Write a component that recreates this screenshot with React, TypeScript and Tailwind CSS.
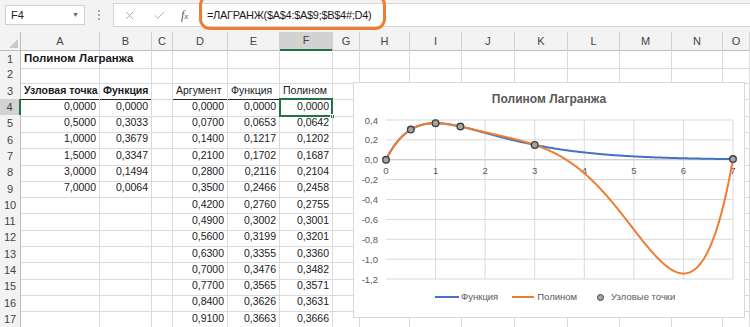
import { X, Check } from "lucide-react";

const COLS =
  "grid grid-cols-[21px_79px_52px_21px_55px_52px_53px_27px_50px_52px_53px_53px_52px_52px_51px_1fr]";
const LETTERS = ["A", "B", "C", "D", "E", "F", "G", "H", "I", "J", "K", "L", "M", "N", "O"];

const nodeX = [0, 0.5, 1, 1.5, 3, 7];
const nodeY = [0, 0.3033, 0.3679, 0.3347, 0.1494, 0.0064];

const argCol = ["0,0000", "0,0700", "0,1400", "0,2100", "0,2800", "0,3500", "0,4200", "0,4900", "0,5600", "0,6300", "0,7000", "0,7700", "0,8400", "0,9100"];
const funCol = ["0,0000", "0,0653", "0,1217", "0,1702", "0,2116", "0,2466", "0,2760", "0,3002", "0,3199", "0,3355", "0,3476", "0,3565", "0,3626", "0,3663"];
const polCol = ["0,0000", "0,0642", "0,1202", "0,1687", "0,2104", "0,2458", "0,2755", "0,3001", "0,3201", "0,3360", "0,3482", "0,3571", "0,3631", "0,3666"];

function lagrange(x: number) {
  let sum = 0;
  for (let i = 0; i < nodeX.length; i++) {
    let term = nodeY[i];
    for (let j = 0; j < nodeX.length; j++) {
      if (j !== i) term *= (x - nodeX[j]) / (nodeX[i] - nodeX[j]);
    }
    sum += term;
  }
  return sum;
}

// chart geometry (px inside the chart box)
const px = (v: number) => 33 + v * 49.57;
const py = (v: number) => 38 + (0.4 - v) * 99.375;

function curve(fn: (x: number) => number) {
  const pts: string[] = [];
  for (let i = 0; i <= 280; i++) {
    const x = (i / 280) * 7;
    pts.push(`${px(x).toFixed(2)},${py(fn(x)).toFixed(2)}`);
  }
  return "M" + pts.join(" L");
}

function Cell({
  children,
  right,
  bold,
  under,
}: {
  children?: React.ReactNode;
  right?: boolean;
  bold?: boolean;
  under?: boolean;
}) {
  return (
    <div
      className={`h-full border-r border-b border-r-[#dadada] ${
        under ? "border-b-[#262626]" : "border-b-[#dadada]"
      } flex items-end pb-[1px] px-[3px] whitespace-nowrap overflow-visible text-[#1a1a1a] ${
        right ? "justify-end" : "justify-start"
      } ${bold ? "font-bold" : ""}`}
    >
      {children}
    </div>
  );
}

function RowHead({ n, active }: { n: number; active?: boolean }) {
  return (
    <div
      className={`h-full flex items-center justify-center border-b border-b-[#d0d0d0] text-[#444] text-[11px] ${
        active ? "bg-[#d2d2d2] border-r-2 border-r-[#217346]" : "bg-[#f3f3f3] border-r border-r-[#bdbdbd]"
      }`}
    >
      {n}
    </div>
  );
}

function Chart() {
  const yTicks = [0.4, 0.2, 0, -0.2, -0.4, -0.6, -0.8, -1.0, -1.2];
  return (
    <div className="absolute left-[353px] top-[82px] w-[392px] h-[236px] bg-white border border-[#d9d9d9]">
      <svg width="392" height="236" className="absolute left-[-1px] top-[-1px]">
        {yTicks.map((v) => (
          <line key={v} x1={px(0)} x2={px(7)} y1={py(v)} y2={py(v)} stroke={v === 0 ? "#bfbfbf" : "#d9d9d9"} strokeWidth="1" />
        ))}
        {[1, 2, 3, 4, 5, 6, 7].map((i) => (
          <line key={i} x1={px(i)} x2={px(i)} y1={py(0.4)} y2={py(-1.2)} stroke="#d9d9d9" strokeWidth="1" />
        ))}
        {yTicks.map((v) => (
          <text
            key={v}
            x="25"
            y={py(v) + 3.5}
            textAnchor="end"
            fontSize="9.5"
            fill="#595959"
            fontFamily="'Liberation Sans', Arial, sans-serif"
          >
            {v.toFixed(1).replace(".", ",").replace("-0,0", "0,0")}
          </text>
        ))}
        {[0, 1, 2, 3, 4, 5, 6, 7].map((i) => (
          <text
            key={i}
            x={px(i)}
            y={py(0) + 14}
            textAnchor="middle"
            fontSize="9.5"
            fill="#595959"
            fontFamily="'Liberation Sans', Arial, sans-serif"
          >
            {i}
          </text>
        ))}
        <path d={curve((x) => x * Math.exp(-x))} fill="none" stroke="#4472c4" strokeWidth="2" />
        <path d={curve(lagrange)} fill="none" stroke="#ed7d31" strokeWidth="2" />
        {nodeX.map((x, i) => (
          <circle key={i} cx={px(x)} cy={py(nodeY[i])} r="3.3" fill="#a5a5a5" stroke="#404040" strokeWidth="1.4" />
        ))}
      </svg>
      <div className="relative flex flex-col h-full">
        <div className="h-[32px] flex items-center justify-center text-[12px] font-bold text-[#595959]">
          Полином Лагранжа
        </div>
        <div className="flex-1" />
        <div className="h-[36px] flex items-start pt-[10px] pl-[81px] text-[9.5px] text-[#595959] leading-[12px]">
          <div className="flex items-center">
            <span className="w-[24px] h-[2px] bg-[#4472c4]" />
            <span className="ml-[2px]">Функция</span>
          </div>
          <div className="flex items-center ml-[14px]">
            <span className="w-[22px] h-[2px] bg-[#ed7d31]" />
            <span className="ml-[3px]">Полином</span>
          </div>
          <div className="flex items-center ml-[20px]">
            <span className="w-[7px] h-[7px] rounded-full bg-[#a5a5a5] border-[1.4px] border-[#404040]" />
            <span className="ml-[7px]">Узловые точки</span>
          </div>
        </div>
      </div>
    </div>
  );
}

export default function App() {
  const rowNums = Array.from({ length: 17 }, (_, i) => i + 1);
  const aVals = ["0,0000", "0,5000", "1,0000", "1,5000", "3,0000", "7,0000"];
  const bVals = ["0,0000", "0,3033", "0,3679", "0,3347", "0,1494", "0,0064"];

  return (
    <div className="w-[750px] h-[327px] overflow-hidden bg-white relative font-['Liberation_Sans',Arial,sans-serif] text-[10.5px]">
      {/* formula bar */}
      <div className="h-[32px] bg-[#f3f3f3] flex items-start pt-[5px] pl-[5px] text-[11px]">
        <div className="w-[80px] h-[20px] bg-white border border-[#d0d0d0] flex items-center justify-between pl-[5px] pr-[5px] text-[#222]">
          <span>F4</span>
          <span className="text-[7px] text-[#666]">▼</span>
        </div>
        <div className="w-[28px] h-[20px] flex flex-col items-center justify-center gap-[2px]">
          <span className="w-[2px] h-[2px] bg-[#aaa]" />
          <span className="w-[2px] h-[2px] bg-[#aaa]" />
          <span className="w-[2px] h-[2px] bg-[#aaa]" />
        </div>
        <div className="flex-1 h-[24px] bg-white border-y border-l border-[#d6d6d6] -mt-[2px] flex items-center">
          <div className="w-[87px] flex items-center">
            <X className="ml-[9px] text-[#9a9a9a]" size={13} strokeWidth={1.5} />
            <Check className="ml-[17px] text-[#9a9a9a]" size={13} strokeWidth={1.5} />
            <span className="ml-[15px] font-['Liberation_Serif',serif] italic text-[12px] text-[#555]">
              f<span className="text-[9px]">x</span>
            </span>
          </div>
          <div className="relative h-[24px] flex items-center">
            <div className="absolute left-[-2px] top-[-9px] w-[187px] h-[36px] rounded-[11px] border-[3px] border-[#ed7d31]" />
            <span className="ml-[6px] text-[11px] text-[#1a1a1a] tracking-[-0.3px]">=ЛАГРАНЖ($A$4:$A$9;$B$4#;D4)</span>
          </div>
        </div>
      </div>

      {/* column headers */}
      <div className={`${COLS} h-[18px] bg-[#f3f3f3] text-[#444] text-[11px]`}>
        <div className="border-r border-b border-[#bdbdbd] relative">
          <div className="absolute right-[2px] bottom-[2px] w-0 h-0 border-l-[9px] border-l-transparent border-b-[9px] border-b-[#c8c8c8]" />
        </div>
        {LETTERS.map((l) => (
          <div
            key={l}
            className={`flex items-center justify-center border-r border-r-[#d0d0d0] ${
              l === "F" ? "bg-[#d2d2d2] border-b-2 border-b-[#217346]" : "border-b border-b-[#bdbdbd]"
            }`}
          >
            {l}
          </div>
        ))}
      </div>

      {/* sheet rows */}
      {rowNums.map((r) => {
        const di = r - 4;
        const ai = r - 4;
        return (
          <div key={r} className={`${COLS} h-[16.3px]`}>
            <RowHead n={r} active={r === 4} />
            <Cell bold={r === 1 || r === 3} right={ai >= 0} under={r === 3}>
              {r === 1 ? (
                <span className="text-[11.5px]">Полином Лагранжа</span>
              ) : r === 3 ? (
                "Узловая точка"
              ) : ai >= 0 && ai < 6 ? (
                aVals[ai]
              ) : null}
            </Cell>
            <Cell bold={r === 3} right={r !== 3} under={r === 3}>
              {r === 3 ? "Функция" : ai >= 0 && ai < 6 ? bVals[ai] : null}
            </Cell>
            <Cell />
            <Cell right={r !== 3} under={r === 3}>
              {r === 3 ? "Аргумент" : di >= 0 ? argCol[di] : null}
            </Cell>
            <Cell right={r !== 3} under={r === 3}>
              {r === 3 ? "Функция" : di >= 0 ? funCol[di] : null}
            </Cell>
            <div className="relative h-full">
              <Cell right={r !== 3} under={r === 3}>
                {r === 3 ? "Полином" : di >= 0 ? polCol[di] : null}
              </Cell>
              {r === 4 && (
                <div className="absolute left-[-1px] top-[-1px] right-0 bottom-0 border-2 border-[#217346]">
                  <div className="absolute right-[-4px] bottom-[-4px] w-[5px] h-[5px] bg-[#217346] border border-white" />
                </div>
              )}
            </div>
            {Array.from({ length: 9 }).map((__, k) => (
              <Cell key={k} />
            ))}
          </div>
        );
      })}

      <Chart />
    </div>
  );
}
